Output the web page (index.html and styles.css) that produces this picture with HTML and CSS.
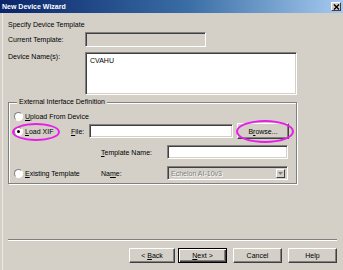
FILE: index.html
```html
<!DOCTYPE html>
<html lang="en">
<head>
    <meta charset="UTF-8">
    <title>New Device Wizard</title>
    <link rel="stylesheet" href="styles.css">
</head>
<body>
    <div class="window">
        <div class="titlebar">
            <span class="title">New Device Wizard</span>
            <button class="close-button">
                <svg width="7" height="6" viewBox="0 0 7 6"><path d="M1 0.5 L6 5.5 M6 0.5 L1 5.5" stroke="#000" stroke-width="1.4"/></svg>
            </button>
        </div>

        <div class="content">
            <div class="heading">Specify Device Template</div>

            <div class="form-row center">
                <label class="row-label">Current Template:</label>
                <div class="field disabled short"></div>
            </div>

            <div class="form-row top">
                <label class="row-label">Device Name(s):</label>
                <div class="field names">CVAHU</div>
            </div>

            <fieldset class="group">
                <legend>External Interface Definition</legend>

                <div class="group-row upload-row">
                    <span class="radio"></span>
                    <span><u>U</u>pload From Device</span>
                </div>

                <div class="group-row xif-row">
                    <div class="radio-cell narrow">
                        <span class="radio checked"></span>
                        <span><u>L</u>oad XIF</span>
                    </div>
                    <label class="file-label"><u>F</u>ile:</label>
                    <div class="field file"></div>
                    <button class="btn browse">B<u>r</u>owse...</button>
                </div>

                <div class="group-row template-row">
                    <div class="radio-cell wide"></div>
                    <label class="sub-label"><u>T</u>emplate Name:</label>
                    <div class="field medium"></div>
                </div>

                <div class="group-row existing-row">
                    <div class="radio-cell wide">
                        <span class="radio"></span>
                        <span><u>E</u>xisting Template</span>
                    </div>
                    <label class="sub-label">Na<u>m</u>e:</label>
                    <div class="field disabled medium select">
                        <span class="select-text">Echelon AI-10v3</span>
                        <span class="select-arrow">
                            <svg width="5" height="3" viewBox="0 0 5 3"><path d="M0 0 H5 L2.5 3 Z" fill="#808080"/></svg>
                        </span>
                    </div>
                </div>
            </fieldset>
        </div>

        <div class="separator"></div>

        <div class="buttons">
            <button class="btn back">&lt; <u>B</u>ack</button>
            <button class="btn next default"><u>N</u>ext &gt;</button>
            <button class="btn cancel">Cancel</button>
            <button class="btn help">Help</button>
        </div>

        <!-- annotation marks drawn over the dialog -->
        <div class="mark mark-xif"></div>
        <div class="mark mark-browse"></div>
    </div>
</body>
</html>
```

FILE: styles.css
```css
body {
    margin: 0;
    background-color: #d4d0c8;
    font-family: "Liberation Sans", Arial, sans-serif;
    font-size: 7px;
    color: #000;
}

.window {
    position: relative;
    width: 343px;
    height: 270px;
    display: flex;
    flex-direction: column;
    background-color: #d4d0c8;
    box-shadow: inset 2px 0 0 #d4d0c8, inset 3px 0 0 #ece9e2;
}

.titlebar {
    height: 13px;
    display: flex;
    align-items: center;
    justify-content: space-between;
    padding: 0 2px 0 2px;
    background: linear-gradient(to right, #0a246a, #3a6ea5 55%, #a6caf0);
}

.title {
    color: #fff;
    font-weight: bold;
    font-size: 7px;
}

.close-button {
    width: 10px;
    height: 9px;
    padding: 0;
    display: flex;
    align-items: center;
    justify-content: center;
    background-color: #d4d0c8;
    border: 1px solid;
    border-color: #fff #404040 #404040 #fff;
}

.content {
    flex: 1;
    padding: 0 8px;
}

.heading {
    margin-top: 7px;
    line-height: 10px;
}

.form-row {
    display: flex;
}

.form-row.center {
    align-items: center;
    margin-top: 2px;
}

.form-row.top {
    align-items: flex-start;
    margin-top: 5px;
}

.row-label {
    width: 77px;
    line-height: 10px;
}

.field {
    box-sizing: border-box;
    background-color: #fff;
    border: 1px solid;
    border-color: #808080 #fff #fff #808080;
    box-shadow: inset 1px 1px 0 #404040, inset -1px -1px 0 #d4d0c8;
}

.field.disabled {
    background-color: #d4d0c8;
}

.field.short {
    width: 121px;
    height: 15px;
}

.field.names {
    width: 212px;
    height: 43px;
    padding: 3px 4px;
    line-height: 9px;
}

.group {
    width: 289px;
    box-sizing: border-box;
    margin: 2px 0 0 0;
    padding: 4px 6px 3px 5px;
    border: 1px solid #808080;
    box-shadow: inset 1px 1px 0 #fff, 1px 1px 0 #fff;
}

.group legend {
    margin-left: 3px;
    padding: 0 2px;
    line-height: 10px;
    background-color: #d4d0c8;
}

.group-row {
    display: flex;
    align-items: center;
}

.upload-row {
    height: 10px;
}

.xif-row {
    height: 16px;
    margin-top: 2px;
}

.template-row {
    height: 14px;
    margin-top: 6px;
}

.existing-row {
    height: 14px;
    margin-top: 7px;
}

.radio-cell {
    display: flex;
    align-items: center;
}

.radio-cell.narrow {
    width: 57px;
}

.radio-cell.wide {
    width: 87px;
}

.radio {
    position: relative;
    width: 9px;
    height: 9px;
    box-sizing: border-box;
    margin-right: 2px;
    border-radius: 50%;
    background-color: #fff;
    border: 1px solid;
    border-color: #808080 #fff #fff #808080;
}

.radio.checked::after {
    content: "";
    position: absolute;
    left: 2px;
    top: 2px;
    width: 3px;
    height: 3px;
    border-radius: 50%;
    background-color: #000;
}

.file-label {
    width: 18px;
}

.field.file {
    width: 144px;
    height: 14px;
}

.sub-label {
    width: 66px;
}

.field.medium {
    width: 121px;
    height: 14px;
}

.field.select {
    display: flex;
    align-items: center;
    justify-content: space-between;
    padding: 0 2px 0 3px;
}

.select-text {
    color: #808080;
    text-shadow: 1px 1px 0 #fff;
}

.select-arrow {
    width: 9px;
    height: 9px;
    box-sizing: border-box;
    display: flex;
    align-items: center;
    justify-content: center;
    border: 1px solid;
    border-color: #fff #404040 #404040 #fff;
}

.btn {
    box-sizing: border-box;
    height: 16px;
    padding: 0;
    font-family: "Liberation Sans", Arial, sans-serif;
    font-size: 7px;
    color: #000;
    background-color: #d4d0c8;
    border: 1px solid;
    border-color: #fff #404040 #404040 #fff;
    box-shadow: inset -1px -1px 0 #808080;
}

.btn.browse {
    width: 52px;
    margin-left: 4px;
}

.separator {
    height: 1px;
    margin: 0 6px 7px 8px;
    border-top: 1px solid #808080;
    border-bottom: 1px solid #fff;
    height: 0;
}

.buttons {
    display: flex;
    justify-content: flex-end;
    gap: 6px;
    padding: 0 6px 7px 0;
}

.buttons .btn {
    width: 49px;
    height: 15px;
}

.buttons .back {
    width: 46px;
    margin-right: -3px;
}

.btn.default {
    border: 1px solid #000;
    box-shadow: inset 1px 1px 0 #fff, inset -1px -1px 0 #404040, inset -2px -2px 0 #808080;
}

.mark {
    position: absolute;
    border: 2px solid #e81ee8;
    border-radius: 50%;
    box-sizing: border-box;
}

.mark-xif {
    left: 12px;
    top: 123px;
    width: 48px;
    height: 18px;
}

.mark-browse {
    left: 236px;
    top: 120px;
    width: 58px;
    height: 23px;
}
```
